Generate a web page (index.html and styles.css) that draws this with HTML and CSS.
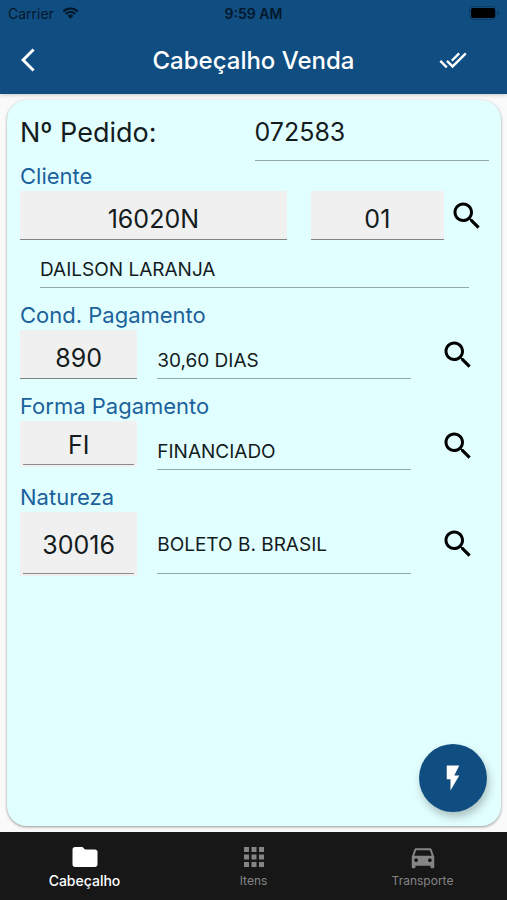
FILE: index.html
```html
<!DOCTYPE html>
<html lang="pt-BR">
<head>
    <meta charset="UTF-8">
    <meta name="viewport" content="width=device-width, initial-scale=1.0">
    <title>Cabeçalho Venda</title>
    <link rel="stylesheet" href="styles.css">
</head>
<body>

<!-- Shared icons -->
<svg class="icon-defs" aria-hidden="true">
    <symbol id="icon-search" viewBox="0 0 24 24">
        <path d="M15.5 14h-.79l-.28-.27C15.41 12.59 16 11.11 16 9.5 16 5.91 13.09 3 9.5 3S3 5.91 3 9.5 5.91 16 9.5 16c1.61 0 3.09-.59 4.23-1.57l.27.28v.79l5 4.99L20.49 19l-4.99-5zm-6 0C7.01 14 5 11.99 5 9.5S7.01 5 9.5 5 14 7.01 14 9.5 11.99 14 9.5 14z"/>
    </symbol>
</svg>

<!-- Header -->
<header class="app-header">
    <div class="status-bar">
        <div class="status-carrier">
            <span>Carrier</span>
            <svg class="wifi" viewBox="0 0 18 13">
                <path d="M1.2 4.8a11 11 0 0 1 15.6 0M3.9 7.5a7.2 7.2 0 0 1 10.2 0" fill="none" stroke="currentColor" stroke-width="2.3"/>
                <path d="M9 12.7L5.9 9.6a4.4 4.4 0 0 1 6.2 0z"/>
            </svg>
        </div>
        <span class="status-time">9:59 AM</span>
        <div class="status-battery">
            <svg class="battery" viewBox="0 0 30 14">
                <rect x="0.5" y="0.5" width="26" height="13" rx="3.5" fill="none" stroke="#0b3c66"/>
                <rect x="2" y="2" width="24" height="10" rx="2"/>
                <path d="M28 4.5v5c1.5-.6 2-1.5 2-2.5s-.5-1.9-2-2.5z" fill="#0b3c66"/>
            </svg>
        </div>
    </div>
    <div class="toolbar">
        <button type="button" class="btn-icon btn-back" aria-label="Voltar">
            <svg viewBox="0 0 24 24"><path d="M11.67 3.87L9.9 2.1 0 12l9.9 9.9 1.77-1.77L3.54 12z"/></svg>
        </button>
        <h1>Cabeçalho Venda</h1>
        <button type="button" class="btn-icon btn-confirm" aria-label="Confirmar">
            <svg viewBox="0 0 24 24"><path d="M18 7l-1.41-1.41-6.34 6.34 1.41 1.41L18 7zm4.24-1.41L11.66 16.17 7.48 12l-1.41 1.41L11.66 19l12-12-1.42-1.41zM.41 13.41L6 19l1.41-1.41L1.83 12 .41 13.41z"/></svg>
        </button>
    </div>
</header>

<!-- Order form -->
<main>
    <form class="card">
        <div class="row row-order">
            <label class="order-label" for="pedido">Nº Pedido:</label>
            <input type="text" id="pedido" class="line-input order-input" value="072583">
        </div>

        <label class="field-label" for="cliente">Cliente</label>
        <div class="row row-client">
            <input type="text" id="cliente" class="code-input client-code" value="16020N">
            <input type="text" id="loja" class="code-input client-store" value="01" aria-label="Loja">
            <button type="button" class="btn-search" aria-label="Buscar cliente"><svg><use href="#icon-search"/></svg></button>
        </div>
        <div class="row row-name">
            <input type="text" id="nome" class="line-input" value="DAILSON LARANJA" aria-label="Nome do cliente">
        </div>

        <label class="field-label" for="condicao">Cond. Pagamento</label>
        <div class="row">
            <input type="text" id="condicao" class="code-input" value="890">
            <input type="text" class="line-input" value="30,60 DIAS" aria-label="Descrição da condição">
            <button type="button" class="btn-search" aria-label="Buscar condição"><svg><use href="#icon-search"/></svg></button>
        </div>

        <label class="field-label" for="forma">Forma Pagamento</label>
        <div class="row">
            <div class="code-box code-box-short">
                <input type="text" id="forma" value="FI">
            </div>
            <input type="text" class="line-input" value="FINANCIADO" aria-label="Descrição da forma">
            <button type="button" class="btn-search" aria-label="Buscar forma"><svg><use href="#icon-search"/></svg></button>
        </div>

        <label class="field-label" for="natureza">Natureza</label>
        <div class="row row-tall">
            <div class="code-box">
                <input type="text" id="natureza" value="30016">
            </div>
            <input type="text" class="line-input" value="BOLETO B. BRASIL" aria-label="Descrição da natureza">
            <button type="button" class="btn-search" aria-label="Buscar natureza"><svg><use href="#icon-search"/></svg></button>
        </div>

        <button type="button" class="fab" aria-label="Ações">
            <svg viewBox="0 0 24 24"><path d="M7 2v11h3v9l7-12h-4l4-8z"/></svg>
        </button>
    </form>
</main>

<!-- Bottom tabs -->
<nav class="tabs">
    <a href="#cabecalho" class="tab active">
        <svg viewBox="0 0 24 24"><path d="M10 4H4c-1.1 0-1.99.9-1.99 2L2 18c0 1.1.9 2 2 2h16c1.1 0 2-.9 2-2V8c0-1.1-.9-2-2-2h-8l-2-2z"/></svg>
        <span>Cabeçalho</span>
    </a>
    <a href="#itens" class="tab">
        <svg viewBox="0 0 24 24"><path d="M4 8h4V4H4v4zm6 12h4v-4h-4v4zm-6 0h4v-4H4v4zm0-6h4v-4H4v4zm6 0h4v-4h-4v4zm6-10v4h4V4h-4zm-6 4h4V4h-4v4zm6 6h4v-4h-4v4zm0 6h4v-4h-4v4z"/></svg>
        <span>Itens</span>
    </a>
    <a href="#transporte" class="tab">
        <svg viewBox="0 0 24 24"><path d="M18.92 6.01C18.72 5.42 18.16 5 17.5 5h-11c-.66 0-1.21.42-1.42 1.01L3 12v8c0 .55.45 1 1 1h1c.55 0 1-.45 1-1v-1h12v1c0 .55.45 1 1 1h1c.55 0 1-.45 1-1v-8l-2.08-5.99zM6.5 16c-.83 0-1.5-.67-1.5-1.5S5.67 13 6.5 13s1.5.67 1.5 1.5S7.33 16 6.5 16zm11 0c-.83 0-1.5-.67-1.5-1.5s.67-1.5 1.5-1.5 1.5.67 1.5 1.5-.67 1.5-1.5 1.5zM5 11l1.5-4.5h11L19 11H5z"/></svg>
        <span>Transporte</span>
    </a>
</nav>

</body>
</html>
```
FILE: styles.css
```css
* {
    box-sizing: border-box;
}

body {
    font-family: Inter, 'Liberation Sans', sans-serif;
    margin: 0;
    background-color: #fafafa;
    color: #141c1e;
    display: flex;
    flex-direction: column;
    min-height: 100vh;
}

input, button {
    font-family: inherit;
    color: inherit;
    margin: 0;
    padding: 0;
    border: none;
    border-radius: 0;
    background: none;
    outline: none;
}

button {
    cursor: pointer;
}

svg {
    display: block;
    fill: currentColor;
}

.icon-defs {
    display: none;
}

/* Header */
.app-header {
    background-color: #104d80;
    box-shadow: 0 1px 4px rgba(0, 0, 0, 0.2);
}

.status-bar {
    display: grid;
    grid-template-columns: 1fr auto 1fr;
    align-items: center;
    height: 26px;
    padding: 0 8px;
    font-size: 14px;
    color: #04182b;
}

.status-carrier {
    display: flex;
    align-items: center;
    gap: 8px;
}

.wifi {
    width: 17px;
    height: 12px;
}

.status-time {
    font-weight: 600;
}

.status-battery {
    display: flex;
    justify-content: flex-end;
    color: #000;
}

.battery {
    width: 30px;
    height: 14px;
}

.toolbar {
    display: grid;
    grid-template-columns: 72px 1fr 72px;
    align-items: center;
    height: 68px;
    padding: 0 18px;
    color: #fff;
}

.toolbar h1 {
    margin: 0;
    font-size: 24px;
    font-weight: 500;
    text-align: center;
    white-space: nowrap;
}

.btn-icon svg {
    width: 28px;
    height: 28px;
}

.btn-back {
    justify-self: start;
    padding-left: 3px;
}

.btn-confirm {
    justify-self: end;
    padding-right: 22px;
}

/* Form card */
main {
    flex: 1;
    display: flex;
    padding: 6px 6px 6px 7px;
}

.card {
    position: relative;
    flex: 1;
    min-width: 0;
    padding: 8px 12px 8px 13px;
    background-color: #e2ffff;
    border-radius: 20px;
    box-shadow: 0 1px 3px rgba(0, 0, 0, 0.4);
}

.row {
    display: flex;
    align-items: flex-end;
}

.line-input {
    flex: 1;
    min-width: 0;
    height: 38px;
    padding-top: 2px;
    font-size: 19px;
    border-bottom: 1px solid #92a6a6;
}

.code-input,
.code-box {
    flex: none;
    width: 25%;
    height: 49px;
    margin-right: 20px;
    background-color: #f0f0f0;
}

.code-input,
.code-box input {
    font-size: 25px;
    text-align: center;
}

.code-input {
    padding-top: 7px;
    border-bottom: 1px solid #7c8484;
}

.code-box {
    height: 64px;
    padding: 0 3px 2px;
}

.code-box input {
    width: 100%;
    height: 100%;
    padding-top: 4px;
    border-bottom: 1px solid #8c8c8c;
}

.code-box-short {
    height: 46px;
    margin-bottom: 3px;
}

.field-label {
    display: block;
    height: 30px;
    margin-top: 12px;
    font-size: 22px;
    line-height: 30px;
    color: #1b629c;
}

.row-order {
    align-items: stretch;
}

.order-label {
    width: 50%;
    font-size: 27px;
    line-height: 50px;
}

.order-input {
    height: 53px;
    padding: 0 0 4px;
    font-size: 25px;
}

.row-order + .field-label {
    margin-top: 0;
}

.row .client-code {
    flex: 2;
    min-width: 0;
    margin-right: 24px;
}

.row .client-store {
    flex: 1;
    min-width: 0;
    margin-right: 0;
}

.row-name {
    padding: 10px 20px 0;
}

.btn-search {
    display: flex;
    align-items: center;
    justify-content: center;
    width: 62px;
    height: 49px;
    margin-left: 16px;
    color: #000;
}

.btn-search svg {
    width: 36px;
    height: 36px;
}

.row-client .btn-search {
    width: 45px;
    margin-left: 0;
}

.row-tall .line-input {
    height: 60px;
    margin-bottom: 2px;
}

.row-tall .btn-search {
    height: 64px;
}

.fab {
    position: absolute;
    right: 14px;
    bottom: 14px;
    display: flex;
    align-items: center;
    justify-content: center;
    width: 68px;
    height: 68px;
    border-radius: 50%;
    background-color: #104d80;
    color: #fff;
    box-shadow: 2px 5px 8px rgba(0, 0, 0, 0.25);
}

.fab svg {
    width: 30px;
    height: 30px;
}

/* Bottom tabs */
.tabs {
    display: flex;
    height: 68px;
    background-color: #171717;
}

.tab {
    flex: 1;
    display: flex;
    flex-direction: column;
    align-items: center;
    padding-top: 10px;
    font-size: 12px;
    line-height: 18px;
    color: #858585;
    text-decoration: none;
}

.tab svg {
    width: 30px;
    height: 30px;
}

.tab.active {
    font-size: 14px;
    font-weight: 500;
    color: #fff;
}
```
